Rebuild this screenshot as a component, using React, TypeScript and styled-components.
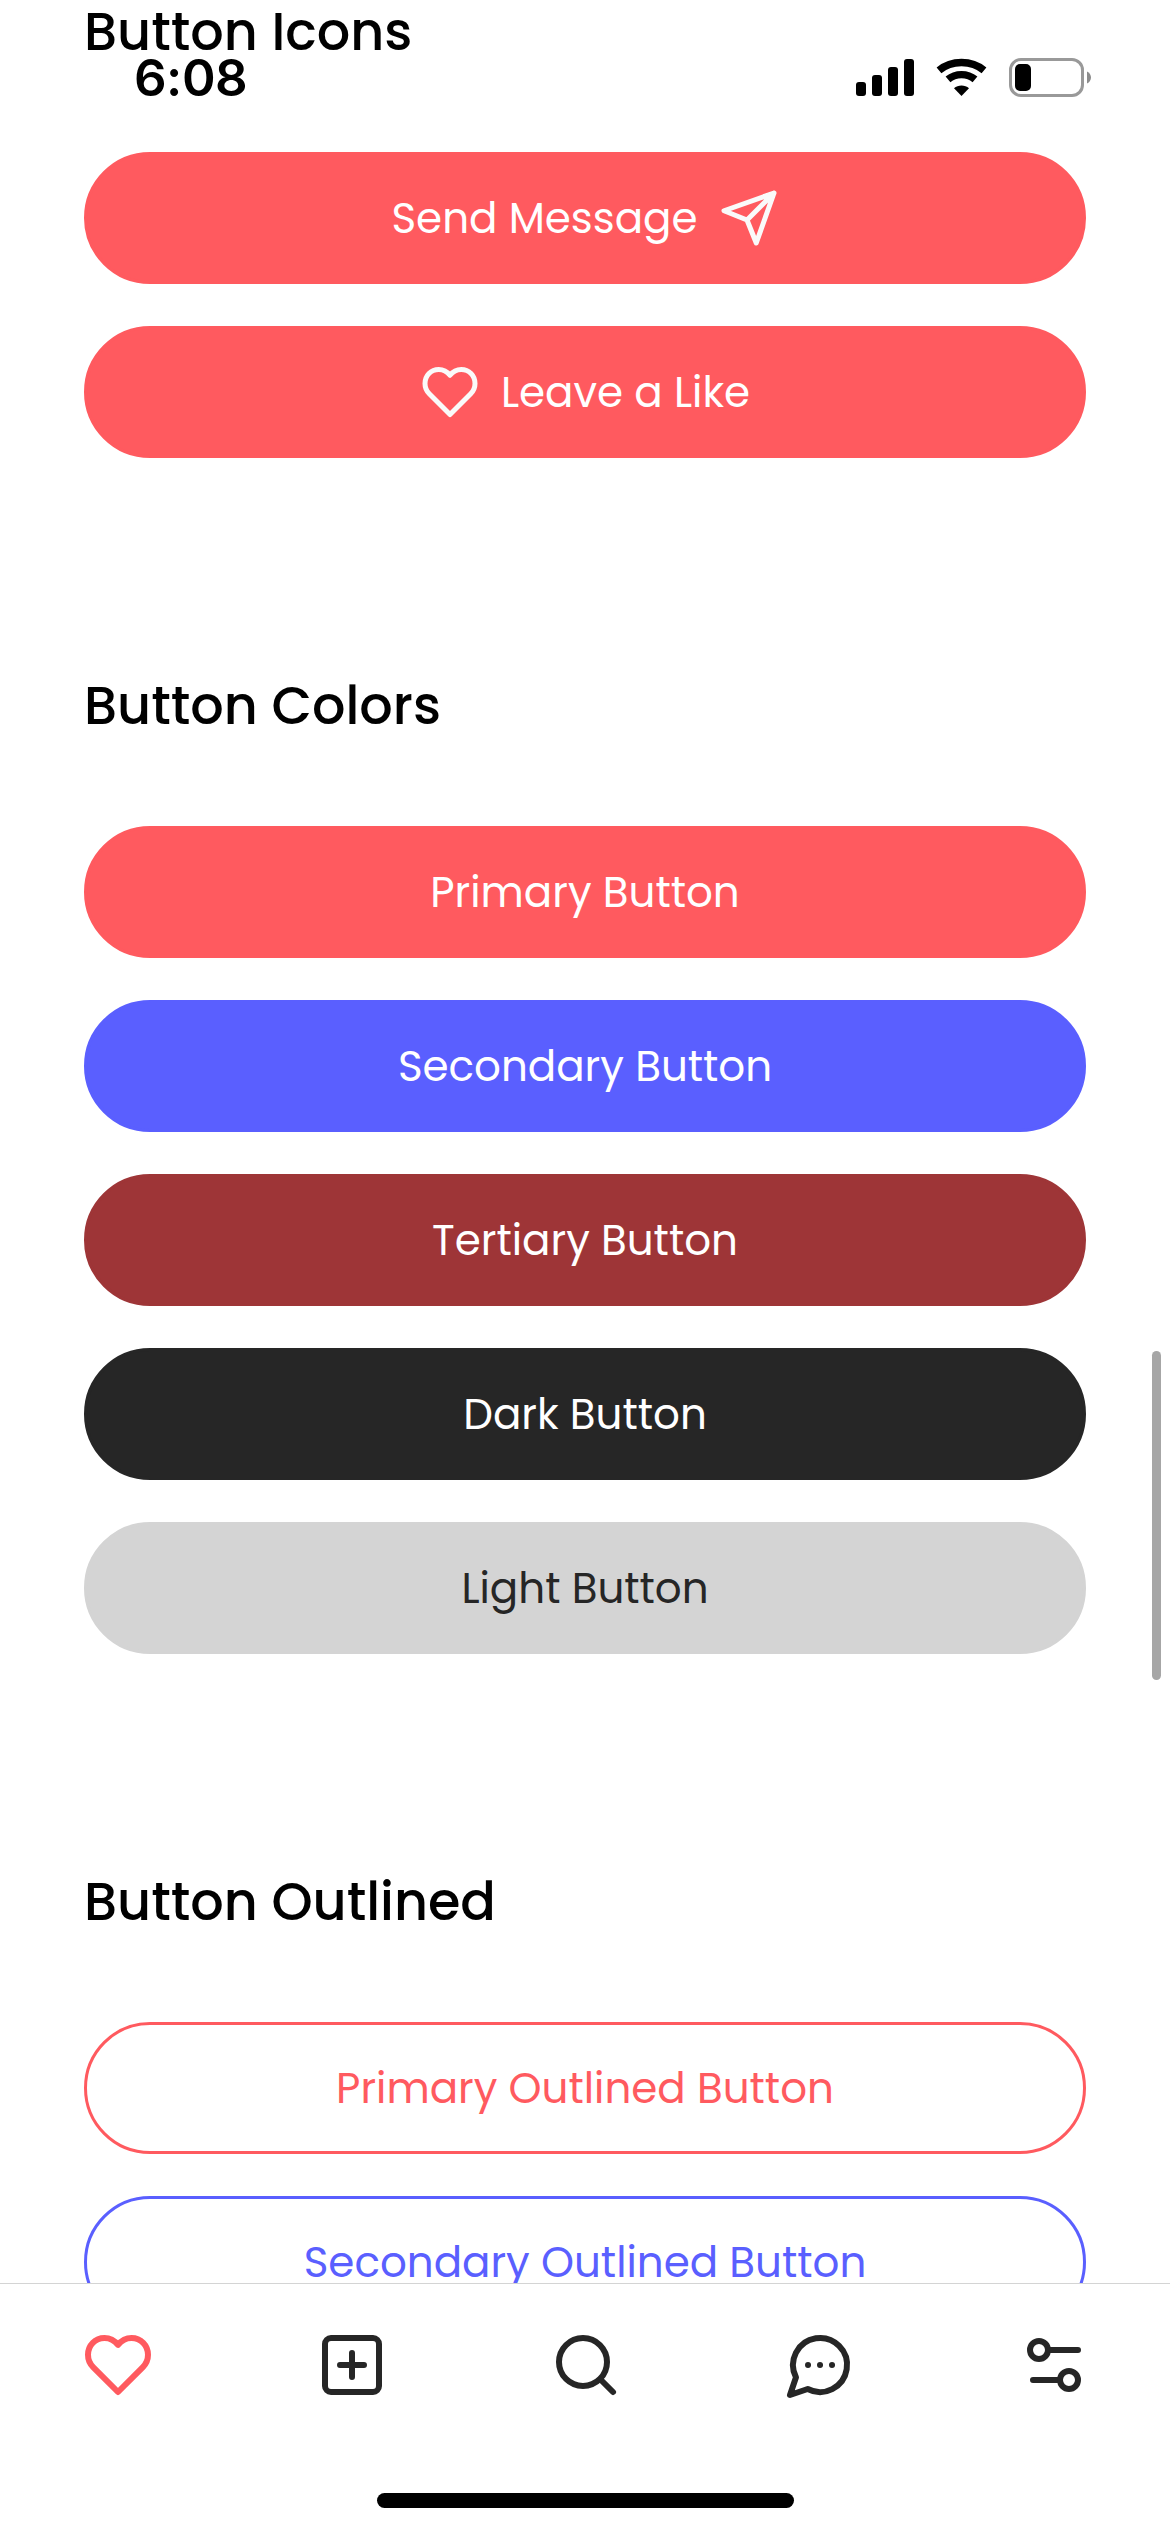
import React from "react";
import styled, { createGlobalStyle } from "styled-components";

const colors = {
  primary: "#ff5a5f",
  secondary: "#5a5fff",
  tertiary: "#9e3537",
  dark: "#262626",
  light: "#d4d4d4",
  white: "#ffffff",
  icon: "#fafafa",
};

const GlobalStyle = createGlobalStyle`
  *, *::before, *::after { box-sizing: border-box; }
  body { margin: 0; background: #fff; }
`;

const Screen = styled.div`
  position: relative;
  display: flex;
  flex-direction: column;
  width: 1170px;
  height: 2532px;
  overflow: hidden;
  background: #fff;
  color: #000;
  font-family: Poppins, Inter, "Liberation Sans", sans-serif;
`;

const StatusBar = styled.header`
  position: absolute;
  top: 0;
  left: 0;
  right: 0;
  z-index: 2;
  display: flex;
  align-items: flex-start;
  justify-content: space-between;
  padding: 48px 79px 0 134px;
`;

const Clock = styled.time`
  font-family: Inter, "Liberation Sans", sans-serif;
  font-size: 51px;
  font-weight: 600;
  line-height: 60px;
  letter-spacing: -0.5px;
`;

const StatusIcons = styled.div`
  display: flex;
  align-items: flex-start;
  padding-top: 10px;

  svg {
    display: block;
  }
`;

const Content = styled.main`
  display: flex;
  flex-direction: column;
  gap: 218px;
  height: 2283px;
  padding: 2px 84px 0;
  overflow: hidden;
`;

const Section = styled.section`
  display: flex;
  flex-direction: column;
  gap: 90px;
`;

const Heading = styled.h2`
  margin: 0;
  font-size: 52.5px;
  font-weight: 500;
  line-height: 60px;
  white-space: nowrap;
`;

const ButtonStack = styled.div`
  display: flex;
  flex-direction: column;
  gap: 42px;
`;

const Button = styled.button<{ $bg: string; $fg: string; $outlined?: boolean }>`
  display: flex;
  flex: none;
  align-items: center;
  justify-content: center;
  gap: 21px;
  width: 100%;
  height: 132px;
  padding: 0;
  border: 3px solid ${(p) => (p.$outlined ? p.$fg : p.$bg)};
  border-radius: 66px;
  background: ${(p) => p.$bg};
  color: ${(p) => p.$fg};
  font: inherit;

  svg {
    flex: none;
    color: ${colors.icon};
  }
`;

const Label = styled.span`
  padding-top: 2px;
  font-size: 42px;
  font-weight: 400;
  line-height: 60px;
  white-space: nowrap;
`;

const ScrollThumb = styled.div`
  position: absolute;
  top: 1351px;
  right: 9px;
  width: 9px;
  height: 329px;
  border-radius: 5px;
  background: #a6a6a6;
`;

const TabBar = styled.nav`
  display: flex;
  flex: 1;
  flex-direction: column;
  padding-top: 45px;
  border-top: 1px solid #d4d4d4;
  background: #fff;
`;

const Tabs = styled.div`
  display: grid;
  grid-template-columns: repeat(5, 234px);
  margin-left: 1px;
`;

const Tab = styled.a<{ $active?: boolean }>`
  display: flex;
  justify-content: center;
  color: ${(p) => (p.$active ? colors.primary : colors.dark)};
`;

const HomeIndicator = styled.div`
  width: 417px;
  height: 15px;
  margin: 92px 0 0 377px;
  border-radius: 8px;
  background: #000;
`;

function Glyph({ size, children }: { size: number; children: React.ReactNode }) {
  return (
    <svg
      width={size}
      height={size}
      viewBox="0 0 24 24"
      fill="none"
      stroke="currentColor"
      strokeWidth={2}
      strokeLinecap="round"
      strokeLinejoin="round"
      overflow="visible"
    >
      {children}
    </svg>
  );
}

const HeartIcon = ({ size }: { size: number }) => (
  <Glyph size={size}>
    <path d="M12 5.3C10.9 3.9 9.3 3 7.5 3C4.4 3 2 5.4 2 8.6C2 10.3 2.6 11.6 3.7 12.7L12 21L20.3 12.7C21.4 11.6 22 10.3 22 8.6C22 5.4 19.6 3 16.5 3C14.7 3 13.1 3.9 12 5.3Z" />
  </Glyph>
);

const SendIcon = ({ size }: { size: number }) => (
  <Glyph size={size}>
    <path d="M22 2L2 9.1L11.2 12.8L14.9 22L22 2L11.2 12.8" />
  </Glyph>
);

const AddIcon = ({ size }: { size: number }) => (
  <Glyph size={size}>
    <rect x={3} y={3} width={18} height={18} rx={2} />
    <path d="M8 12h8M12 8v8" />
  </Glyph>
);

const SearchIcon = ({ size }: { size: number }) => (
  <Glyph size={size}>
    <circle cx={11} cy={11} r={8} />
    <path d="M17 17l4 4" />
  </Glyph>
);

const ChatIcon = ({ size }: { size: number }) => (
  <Glyph size={size}>
    <path d="M7.9 20A9 9 0 1 0 4 16.1L2 22Z" />
    <path d="M8 12h.01M12 12h.01M16 12h.01" />
  </Glyph>
);

const SlidersIcon = ({ size }: { size: number }) => (
  <Glyph size={size}>
    <circle cx={7} cy={7} r={3} />
    <path d="M10 7h10M5 17h9" />
    <circle cx={17} cy={17} r={3} />
  </Glyph>
);

const StatusGlyphs = () => (
  <svg width={237} height={42} viewBox="0 0 237 42" fill="#000">
    <rect x={2} y={24} width={10} height={14} rx={3} />
    <rect x={18} y={17} width={10} height={21} rx={3} />
    <rect x={34} y={9} width={10} height={29} rx={3} />
    <rect x={50} y={1} width={10} height={37} rx={3} />
    <path d="M107.5 38L100 30.3C104 26.6 111 26.6 115 30.3Z" />
    <g fill="none" stroke="#000" strokeWidth={7.4}>
      <path d="M94 21.4C101.5 15 113.5 15 121 21.4" />
      <path d="M85 12.3C97.5 1.8 117.5 1.8 130 12.3" />
    </g>
    <rect x={156.5} y={1.5} width={72} height={36} rx={10.5} fill="none" stroke="#999" strokeWidth={3} />
    <rect x={161} y={6} width={16} height={27} rx={5} />
    <path d="M233 13.5C235.5 14.6 237 17 237 19.5S235.5 24.4 233 25.5Z" fill="#8c8c8c" />
  </svg>
);

const fills = [
  { text: "Primary Button", bg: colors.primary, fg: colors.white },
  { text: "Secondary Button", bg: colors.secondary, fg: colors.white },
  { text: "Tertiary Button", bg: colors.tertiary, fg: colors.white },
  { text: "Dark Button", bg: colors.dark, fg: colors.white },
  { text: "Light Button", bg: colors.light, fg: colors.dark },
];

const outlines = [
  { text: "Primary Outlined Button", color: colors.primary },
  { text: "Secondary Outlined Button", color: colors.secondary },
];

export default function App() {
  return (
    <Screen>
      <GlobalStyle />
      <StatusBar>
        <Clock>6:08</Clock>
        <StatusIcons>
          <StatusGlyphs />
        </StatusIcons>
      </StatusBar>

      <Content>
        <Section>
          <Heading>Button Icons</Heading>
          <ButtonStack>
            <Button $bg={colors.primary} $fg={colors.white}>
              <Label>Send Message</Label>
              <SendIcon size={60} />
            </Button>
            <Button $bg={colors.primary} $fg={colors.white}>
              <HeartIcon size={60} />
              <Label>Leave a Like</Label>
            </Button>
          </ButtonStack>
        </Section>

        <Section>
          <Heading>Button Colors</Heading>
          <ButtonStack>
            {fills.map((b) => (
              <Button key={b.text} $bg={b.bg} $fg={b.fg}>
                <Label>{b.text}</Label>
              </Button>
            ))}
          </ButtonStack>
        </Section>

        <Section>
          <Heading>Button Outlined</Heading>
          <ButtonStack>
            {outlines.map((b) => (
              <Button key={b.text} $bg={colors.white} $fg={b.color} $outlined>
                <Label>{b.text}</Label>
              </Button>
            ))}
          </ButtonStack>
        </Section>
      </Content>

      <ScrollThumb />

      <TabBar>
        <Tabs>
          <Tab $active><HeartIcon size={72} /></Tab>
          <Tab><AddIcon size={72} /></Tab>
          <Tab><SearchIcon size={72} /></Tab>
          <Tab><ChatIcon size={72} /></Tab>
          <Tab><SlidersIcon size={72} /></Tab>
        </Tabs>
        <HomeIndicator />
      </TabBar>
    </Screen>
  );
}
